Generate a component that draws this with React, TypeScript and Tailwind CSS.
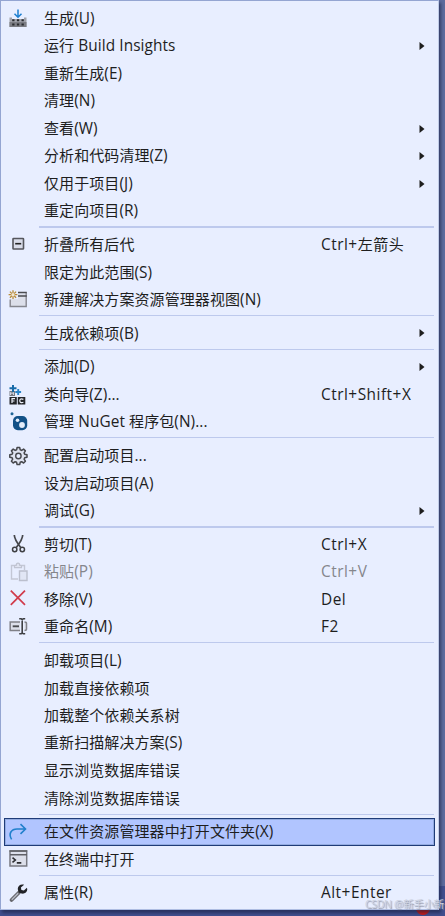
import type { ReactNode } from "react";
import clsx from "clsx";

type Item = {
  label: string;
  shortcut?: string;
  icon?: ReactNode;
  submenu?: boolean;
  disabled?: boolean;
  active?: boolean;
};

const Icon = ({ children }: { children: ReactNode }) => (
  <svg width="20" height="20" viewBox="0 0 20 20" fill="none">
    {children}
  </svg>
);

const BuildIcon = () => (
  <Icon>
    <path d="M1.5 8.5H4V10h12V8.5h2.500V18h-17z" fill="#a0a2aa" />
    <path d="M1.500 13h17v5h-17z" fill="#7b7c83" />
    <path d="M4.200 10.300h2.300v2H4.200zM8.900 10.300h2.300v2H8.900zM13.500 10.300h2.300v2h-2.300zM4.200 14.500h2.300v2H4.200zM8.900 14.500h2.300v2H8.900zM13.500 14.500h2.300v2h-2.300z" fill="#2b2c30" />
    <path d="M10 .5V8M6.500 4.700 10 8.200l3.500-3.500" stroke="#1b7ed0" strokeWidth="1.500" />
  </Icon>
);

const CollapseIcon = () => (
  <Icon>
    <rect x="5" y="3.500" width="10.500" height="10.500" rx=".6" fill="#d9dce9" stroke="#55565c" strokeWidth="1.600" />
    <path d="M7.200 8.700h6" stroke="#222" strokeWidth="1.600" />
  </Icon>
);

const NewViewIcon = () => (
  <Icon>
    <path d="M10 3.500h8v13H2V9h8z" fill="#dcdfea" />
    <path d="M2.200 9.500v7h16v-14" stroke="#85868e" strokeWidth="1.400" />
    <path d="M10 2.500h8.800M10 6h8.800" stroke="#4b4c50" strokeWidth="1.600" />
    <path d="M5 .3v8.800M.6 4.700h8.800M1.900 1.600l6.200 6.200M8.100 1.600 1.900 7.800" stroke="#b88a36" strokeWidth="1.300" />
    <circle cx="5" cy="4.700" r="1.700" fill="#f0e5d0" />
  </Icon>
);

const ClassWizardIcon = () => (
  <Icon>
    <path d="M1.500 6h5.500v5H1.500z" fill="#777a83" />
    <path d="M2.500 10V7.500l1.500 1 1.500-1V10" stroke="#e8eeff" strokeWidth=".8" />
    <path d="M5 0v7M1.500 3.300h7" stroke="#176aa8" strokeWidth="2" />
    <path d="M10.200 4v6M7.300 7h5.800" stroke="#2a84c8" strokeWidth="1.900" />
    <path d="M1.500 12h7.300v7.500H1.500zM9.800 12h7.500v7.500H9.800z" fill="#242529" />
    <path d="M4 18v-4.300h3M4 16h2.500M15.400 14.400c-3-1.300-4 .3-3.500 1.900.3 1.500 2 1.700 3.500 1" stroke="#eef1fb" strokeWidth="1.200" />
  </Icon>
);

const NuGetIcon = () => (
  <Icon>
    <circle cx="4" cy="1.800" r="1.500" fill="#1f6496" />
    <rect x="5" y="4" width="14.200" height="14.200" rx="4.800" fill="#125187" />
    <circle cx="9.500" cy="8.300" r="1.800" fill="#e4edfa" />
    <circle cx="14" cy="13" r="2.900" fill="#e4edfa" />
  </Icon>
);

const GearIcon = () => (
  <Icon>
    <path
      d="m9.100 1.500-.5 2.300-1.400.6-2-1.300-1.800 1.800 1.300 2-.6 1.400-2.300.5v2.500l2.300.5.6 1.400-1.300 2 1.800 1.800 2-1.300 1.400.6.5 2.300h2.600l.5-2.300 1.400-.6 2 1.300 1.800-1.800-1.300-2 .6-1.400 2.300-.5V8.800l-2.300-.5-.6-1.400 1.300-2-1.800-1.800-2 1.300-1.400-.6-.5-2.300z"
      fill="#dfe3f0"
      stroke="#46474c"
      strokeWidth="1.500"
      strokeLinejoin="round"
    />
    <circle cx="10.400" cy="10" r="2.700" fill="#e8eeff" stroke="#46474c" strokeWidth="1.400" />
  </Icon>
);

const CutIcon = () => (
  <Icon>
    <path d="M6.300 1c0 3 1 5.500 6.400 12.500M14.700 1c0 3-1 5.500-6.400 12.500" stroke="#46474c" strokeWidth="1.700" />
    <circle cx="6.700" cy="15.500" r="2.200" stroke="#3e3f43" strokeWidth="1.500" />
    <circle cx="14.300" cy="15.500" r="2.200" stroke="#3e3f43" strokeWidth="1.500" />
  </Icon>
);

const PasteIcon = () => (
  <Icon>
    <path d="M10 17H3.500V3.500h13V8" stroke="#c3c7d5" strokeWidth="1.400" />
    <path d="M6.500 5.700V3.500h1.700c0-3.300 3.600-3.300 3.600 0h1.700v2.200z" fill="#dfe3f1" stroke="#c0c4d2" strokeWidth="1.200" />
    <path d="M11.500 9H19v9.500h-7.500z" fill="#e1e6f5" stroke="#bbbfcd" strokeWidth="1.400" />
  </Icon>
);

const RemoveIcon = () => (
  <Icon>
    <path d="m2.800 1.700 14.200 14.200M17 1.700 2.800 15.900" stroke="#d13b4b" strokeWidth="1.700" />
  </Icon>
);

const RenameIcon = () => (
  <Icon>
    <path d="M12 5H2.200v8.500H12M16.500 5c1.500 0 2 .5 2 1.500V12c0 1-.5 1.500-2 1.500" fill="#dcdfea" stroke="#808188" strokeWidth="1.500" />
    <path d="M4.700 9.300h6.300" stroke="#4b4c50" strokeWidth="1.900" />
    <path d="M11.200 1.800h2l1 1 1-1h2M11.200 16.700h2l1-1 1 1h2M14.200 2.800v13" stroke="#3e3f43" strokeWidth="1.600" />
  </Icon>
);

const OpenFolderIcon = () => (
  <Icon>
    <path d="M3.600 17.300C0 11.500 3.500 7 9 7h8.500M12.500 2.200 17.500 7l-5 4.800" stroke="#2180cc" strokeWidth="1.600" />
  </Icon>
);

const TerminalIcon = () => (
  <Icon>
    <rect x="2" y="2" width="16.700" height="15" fill="#dcdfea" stroke="#777880" strokeWidth="1.500" />
    <path d="M1.500 2h17.700M2 5.700h17" stroke="#5f6066" strokeWidth="1.500" />
    <path d="m4.500 8.700 2.800 2.300-2.800 2.300M8.800 13.900h4.500" stroke="#2b2c30" strokeWidth="1.600" />
  </Icon>
);

const WrenchIcon = () => (
  <Icon>
    <path d="m3.500 17 7.500-7.500" stroke="#66676d" strokeWidth="3.800" strokeLinecap="round" />
    <path d="m3.700 16.800 6.500-6.500" stroke="#b9bcc8" strokeWidth="1.300" />
    <path d="M16.100 1.700c-4-1.300-7.400 2-6 5.800l.7 2 2.700 1c3.600.8 6.900-2.200 5.400-5.700l-3 2.700-2.500-.5-.5-2.400z" fill="#222327" />
  </Icon>
);

const groups: Item[][] = [
  [
    { label: "生成(U)", icon: <BuildIcon /> },
    { label: "运行 Build Insights", submenu: true },
    { label: "重新生成(E)" },
    { label: "清理(N)" },
    { label: "查看(W)", submenu: true },
    { label: "分析和代码清理(Z)", submenu: true },
    { label: "仅用于项目(J)", submenu: true },
    { label: "重定向项目(R)" },
  ],
  [
    { label: "折叠所有后代", shortcut: "Ctrl+左箭头", icon: <CollapseIcon /> },
    { label: "限定为此范围(S)" },
    { label: "新建解决方案资源管理器视图(N)", icon: <NewViewIcon /> },
  ],
  [{ label: "生成依赖项(B)", submenu: true }],
  [
    { label: "添加(D)", submenu: true },
    { label: "类向导(Z)...", shortcut: "Ctrl+Shift+X", icon: <ClassWizardIcon /> },
    { label: "管理 NuGet 程序包(N)...", icon: <NuGetIcon /> },
  ],
  [
    { label: "配置启动项目...", icon: <GearIcon /> },
    { label: "设为启动项目(A)" },
    { label: "调试(G)", submenu: true },
  ],
  [
    { label: "剪切(T)", shortcut: "Ctrl+X", icon: <CutIcon /> },
    { label: "粘贴(P)", shortcut: "Ctrl+V", icon: <PasteIcon />, disabled: true },
    { label: "移除(V)", shortcut: "Del", icon: <RemoveIcon /> },
    { label: "重命名(M)", shortcut: "F2", icon: <RenameIcon /> },
  ],
  [
    { label: "卸载项目(L)" },
    { label: "加载直接依赖项" },
    { label: "加载整个依赖关系树" },
    { label: "重新扫描解决方案(S)" },
    { label: "显示浏览数据库错误" },
    { label: "清除浏览数据库错误" },
  ],
  [
    { label: "在文件资源管理器中打开文件夹(X)", icon: <OpenFolderIcon />, active: true },
    { label: "在终端中打开", icon: <TerminalIcon /> },
  ],
  [{ label: "属性(R)", shortcut: "Alt+Enter", icon: <WrenchIcon /> }],
];

// separators that render two pixels tall
const thickSeparators = [1, 5];

// Latin runs are set slightly larger than the Chinese around them
const Label = ({ text }: { text: string }) => (
  <>
    {text.split(/([\x20-\x7e]+)/).map((run, i) =>
      i % 2 ? (
        <span key={i} className="whitespace-pre text-[15.4px]">
          {run}
        </span>
      ) : (
        run
      )
    )}
  </>
);

const MenuItem = ({ label, shortcut, icon, submenu, disabled, active }: Item) => (
  <div
    className={clsx(
      "relative flex h-[27.5px] items-center whitespace-nowrap text-[15px] leading-none",
      disabled ? "text-[#85868c]" : "text-[#1e1e1e]"
    )}
  >
    {active && (
      <div className="absolute inset-y-0 left-[3px] right-[3px] border border-[#1f3c78] bg-[#b1c5ff] shadow-[inset_0_0_0_1px_#93abe0]" />
    )}
    <span className="relative ml-[7px] w-[36px] shrink-0">{icon}</span>
    <span className="relative w-[277px] shrink-0 tracking-[0.08px]">
      <Label text={label} />
    </span>
    <span className="relative grow tracking-[0.5px]">{shortcut && <Label text={shortcut} />}</span>
    {submenu && (
      <svg className="mr-[12.8px]" width="6" height="8" viewBox="0 0 6 8">
        <path d="M.5 0v8l5-4z" fill="#1e1e1e" />
      </svg>
    )}
  </div>
);

export default function App() {
  return (
    <div className="relative h-[916px] w-[445px] overflow-hidden bg-linear-to-b from-[#5d6b9d] from-[886px] to-[#414e8e] to-[886px] font-['Open_Sans','Noto_Sans_CJK_SC',sans-serif]">
      <div className="absolute left-[416px] top-[901px] size-[14px] rounded-full bg-[#d51a13]" />
      <div className="relative h-[910px] w-[439px] border border-r-[#bfcbe8] border-b-[#aebde2] border-l-[#94a5d2] border-t-[#94a5d2] bg-[#e8eeff] pt-[3.8px] shadow-[2px_3px_3px_rgba(25,32,65,0.6)]">
        {groups.map((items, i) => (
          <div key={i}>
            {i > 0 && (
              <div className="h-[6.2px] pl-[38px] pr-[4px] pt-[1.6px]">
                <div className={clsx("bg-[#bdc9ed]", thickSeparators.includes(i) ? "h-[2px]" : "h-px")} />
              </div>
            )}
            {items.map((item) => (
              <MenuItem key={item.label} {...item} />
            ))}
          </div>
        ))}
      </div>
      <span className="absolute left-[365px] top-[896px] whitespace-nowrap text-[10.5px] leading-4 tracking-[-0.3px] text-[#cdd2e0] [text-shadow:1px_1px_1px_#8f94a8]">
        CSDN @新手小新
      </span>
    </div>
  );
}
